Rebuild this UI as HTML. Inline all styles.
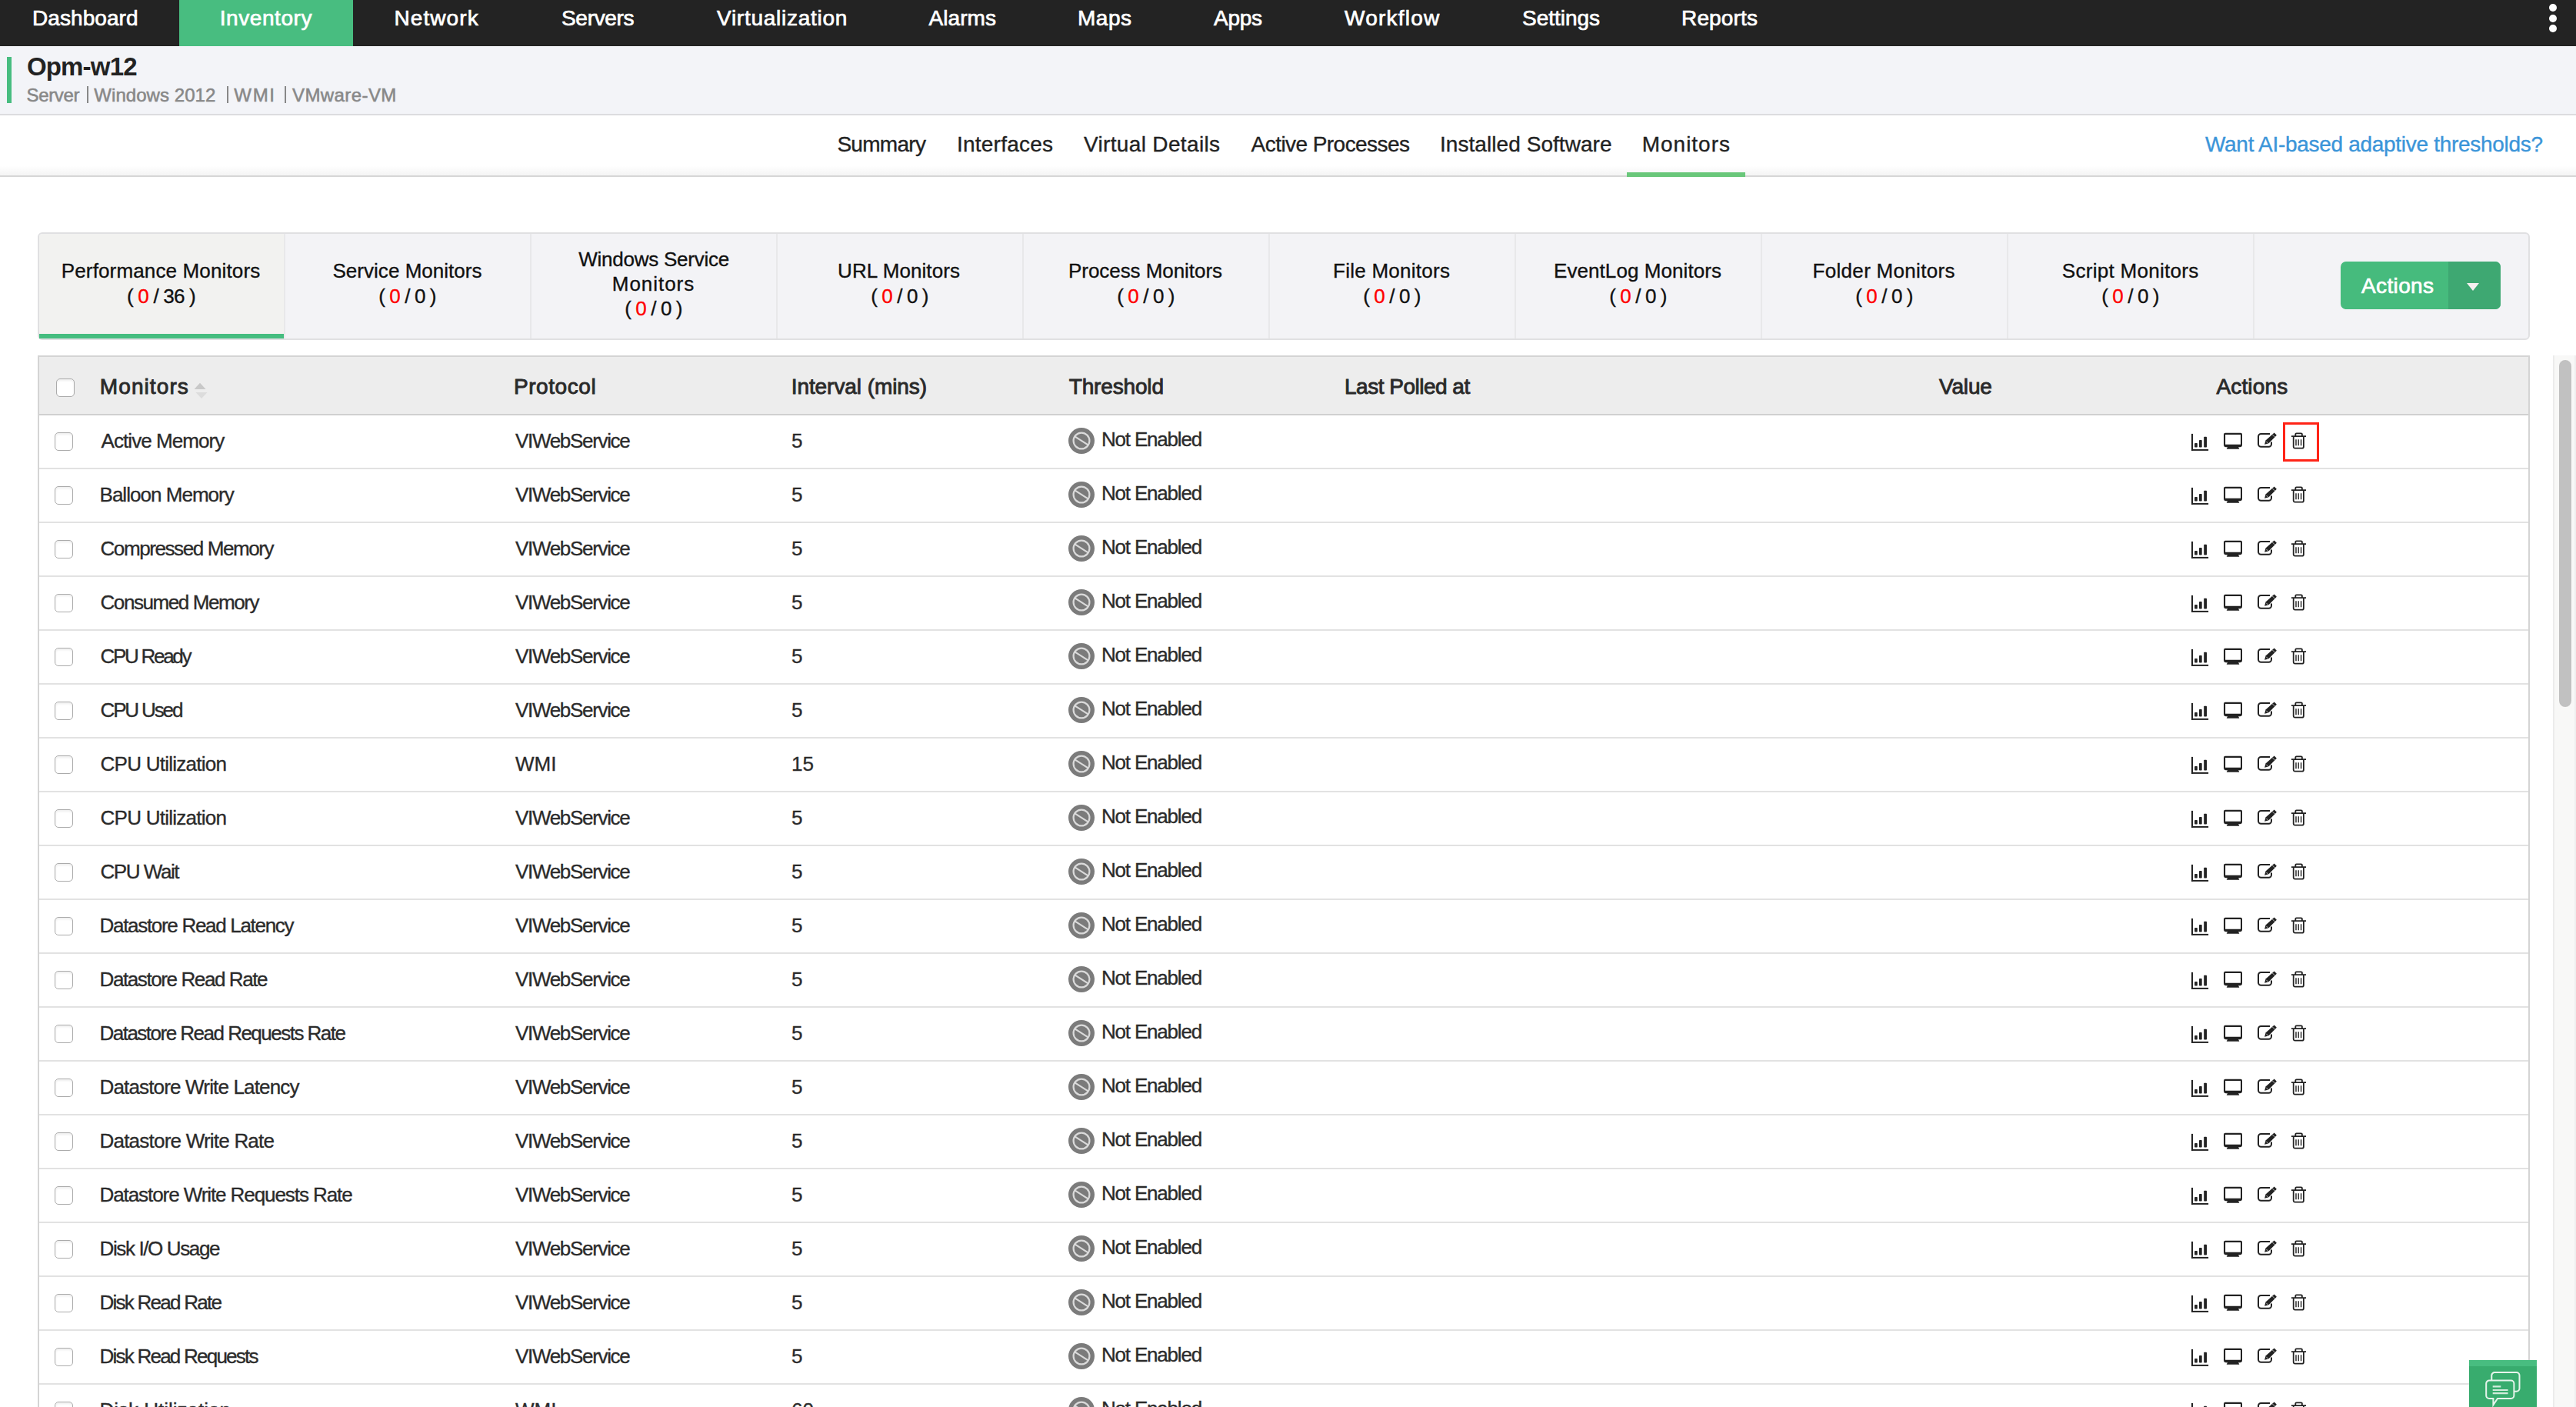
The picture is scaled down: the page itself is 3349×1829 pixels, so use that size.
<!DOCTYPE html><html><head><meta charset='utf-8'><style>
*{margin:0;padding:0;box-sizing:border-box}
html,body{width:3349px;height:1829px;overflow:hidden;background:#fff;font-family:"Liberation Sans",sans-serif;color:#222}
.t{position:absolute;white-space:pre}
.abs{position:absolute}
.cb{position:absolute;width:24px;height:24px;border:1.5px solid #ababab;border-radius:5px;background:#fff;box-shadow:inset 0 2px 3px rgba(0,0,0,0.07)}
</style></head><body>
<div class="abs" style="left:0;top:0;width:3349px;height:60px;background:#232323"></div>
<div class="abs" style="left:233px;top:0;width:226px;height:60px;background:#48bd80"></div>
<div class="t" style="left:42.00px;top:10.29px;font-size:28px;line-height:28px;color:#fff;letter-spacing:0.074px;-webkit-text-stroke-width:0.7px;">Dashboard</div>
<div class="t" style="left:285.70px;top:10.29px;font-size:28px;line-height:28px;color:#fff;letter-spacing:0.579px;-webkit-text-stroke-width:0.7px;">Inventory</div>
<div class="t" style="left:512.40px;top:10.29px;font-size:28px;line-height:28px;color:#fff;letter-spacing:1.102px;-webkit-text-stroke-width:0.7px;">Network</div>
<div class="t" style="left:730.00px;top:10.29px;font-size:28px;line-height:28px;color:#fff;letter-spacing:-0.311px;-webkit-text-stroke-width:0.7px;">Servers</div>
<div class="t" style="left:932.00px;top:10.29px;font-size:28px;line-height:28px;color:#fff;letter-spacing:0.729px;-webkit-text-stroke-width:0.7px;">Virtualization</div>
<div class="t" style="left:1207.60px;top:10.29px;font-size:28px;line-height:28px;color:#fff;letter-spacing:0.057px;-webkit-text-stroke-width:0.7px;">Alarms</div>
<div class="t" style="left:1401.00px;top:10.29px;font-size:28px;line-height:28px;color:#fff;letter-spacing:0.510px;-webkit-text-stroke-width:0.7px;">Maps</div>
<div class="t" style="left:1578.00px;top:10.29px;font-size:28px;line-height:28px;color:#fff;letter-spacing:-0.273px;-webkit-text-stroke-width:0.7px;">Apps</div>
<div class="t" style="left:1748.00px;top:10.29px;font-size:28px;line-height:28px;color:#fff;letter-spacing:1.230px;-webkit-text-stroke-width:0.7px;">Workflow</div>
<div class="t" style="left:1979.00px;top:10.29px;font-size:28px;line-height:28px;color:#fff;letter-spacing:-0.025px;-webkit-text-stroke-width:0.7px;">Settings</div>
<div class="t" style="left:2186.00px;top:10.29px;font-size:28px;line-height:28px;color:#fff;letter-spacing:0.160px;-webkit-text-stroke-width:0.7px;">Reports</div>
<div class="abs" style="left:3314px;top:5.199999999999999px;width:10px;height:10px;border-radius:50%;background:#fff"></div>
<div class="abs" style="left:3314px;top:18.8px;width:10px;height:10px;border-radius:50%;background:#fff"></div>
<div class="abs" style="left:3314px;top:32px;width:10px;height:10px;border-radius:50%;background:#fff"></div>
<div class="abs" style="left:0;top:60px;width:3349px;height:90px;background:#f3f4f8;border-bottom:2px solid #dcdcdf"></div>
<div class="abs" style="left:9px;top:74px;width:6px;height:60px;background:#48bd80"></div>
<div class="t" style="left:34.90px;top:70.36px;font-size:33px;line-height:33px;color:#222;font-weight:700;letter-spacing:-0.813px;">Opm-w12</div>
<div class="t" style="left:34.50px;top:111.68px;font-size:24px;line-height:24px;color:#888;letter-spacing:-0.359px;-webkit-text-stroke-width:0.55px;">Server</div>
<div class="abs" style="left:112.7px;top:111.5px;width:2px;height:22px;background:#888"></div>
<div class="abs" style="left:294.6px;top:111.5px;width:2px;height:22px;background:#888"></div>
<div class="abs" style="left:370.2px;top:111.5px;width:2px;height:22px;background:#888"></div>
<div class="t" style="left:122.30px;top:111.68px;font-size:24px;line-height:24px;color:#888;letter-spacing:0.057px;-webkit-text-stroke-width:0.55px;">Windows 2012</div>
<div class="t" style="left:304.30px;top:111.68px;font-size:24px;line-height:24px;color:#888;letter-spacing:1.678px;-webkit-text-stroke-width:0.55px;">WMI</div>
<div class="t" style="left:380.00px;top:111.68px;font-size:24px;line-height:24px;color:#888;letter-spacing:0.410px;-webkit-text-stroke-width:0.55px;">VMware-VM</div>
<div class="abs" style="left:0;top:150px;width:3349px;height:80px;background:linear-gradient(#fff 0,#fff 84%,#f4f4f4 100%);border-bottom:2px solid #d6d6d6"></div>
<div class="t" style="left:1088.40px;top:173.89px;font-size:28px;line-height:28px;color:#222;letter-spacing:-0.699px;-webkit-text-stroke-width:0.35px;">Summary</div>
<div class="t" style="left:1244.00px;top:173.89px;font-size:28px;line-height:28px;color:#222;letter-spacing:0.228px;-webkit-text-stroke-width:0.35px;">Interfaces</div>
<div class="t" style="left:1409.00px;top:173.89px;font-size:28px;line-height:28px;color:#222;letter-spacing:0.341px;-webkit-text-stroke-width:0.35px;">Virtual Details</div>
<div class="t" style="left:1626.60px;top:173.89px;font-size:28px;line-height:28px;color:#222;letter-spacing:-0.556px;-webkit-text-stroke-width:0.35px;">Active Processes</div>
<div class="t" style="left:1872.00px;top:173.89px;font-size:28px;line-height:28px;color:#222;letter-spacing:0.059px;-webkit-text-stroke-width:0.35px;">Installed Software</div>
<div class="t" style="left:2134.70px;top:173.89px;font-size:28px;line-height:28px;color:#222;letter-spacing:0.991px;-webkit-text-stroke-width:0.35px;">Monitors</div>
<div class="abs" style="left:2115px;top:224px;width:154px;height:6px;background:#69c77a"></div>
<div class="t" style="left:2867.00px;top:173.69px;font-size:28px;line-height:28px;color:#3b95d9;letter-spacing:-0.296px;-webkit-text-stroke-width:0.35px;">Want AI-based adaptive thresholds?</div>
<div class="abs" style="left:49px;top:302px;width:3240px;height:140px;background:#f3f3f6;border:2px solid #e0e0e2;border-radius:6px"><div class="abs" style="left:0;top:0;width:318px;height:136px;background:#f2f2f0;border-top-left-radius:4px"></div><div class="abs" style="left:0;top:130px;width:318px;height:6px;background:#45bd7f"></div></div>
<div class="abs" style="left:369px;top:304px;width:2px;height:136px;background:#e8e8ea"></div>
<div class="abs" style="left:689px;top:304px;width:2px;height:136px;background:#e8e8ea"></div>
<div class="abs" style="left:1009px;top:304px;width:2px;height:136px;background:#e8e8ea"></div>
<div class="abs" style="left:1329px;top:304px;width:2px;height:136px;background:#e8e8ea"></div>
<div class="abs" style="left:1649px;top:304px;width:2px;height:136px;background:#e8e8ea"></div>
<div class="abs" style="left:1969px;top:304px;width:2px;height:136px;background:#e8e8ea"></div>
<div class="abs" style="left:2289px;top:304px;width:2px;height:136px;background:#e8e8ea"></div>
<div class="abs" style="left:2609px;top:304px;width:2px;height:136px;background:#e8e8ea"></div>
<div class="abs" style="left:2929px;top:304px;width:2px;height:136px;background:#e8e8ea"></div>
<div class="t" style="left:79.75px;top:339.49px;font-size:26px;line-height:26px;color:#111;letter-spacing:0.144px;-webkit-text-stroke-width:0.35px;">Performance Monitors</div>
<div class="t" style="left:165.00px;top:371.59px;font-size:26px;line-height:26px;color:#111;letter-spacing:-0.795px;-webkit-text-stroke-width:0.35px;">( <span style='color:#f00'>0</span> / 36 )</div>
<div class="t" style="left:432.50px;top:339.49px;font-size:26px;line-height:26px;color:#111;letter-spacing:0.026px;-webkit-text-stroke-width:0.35px;">Service Monitors</div>
<div class="t" style="left:492.20px;top:371.59px;font-size:26px;line-height:26px;color:#111;letter-spacing:-0.887px;-webkit-text-stroke-width:0.35px;">( <span style='color:#f00'>0</span> / 0 )</div>
<div class="t" style="left:752.15px;top:323.99px;font-size:26px;line-height:26px;color:#111;letter-spacing:-0.231px;-webkit-text-stroke-width:0.35px;">Windows Service</div>
<div class="t" style="left:795.85px;top:356.49px;font-size:26px;line-height:26px;color:#111;letter-spacing:0.943px;-webkit-text-stroke-width:0.35px;">Monitors</div>
<div class="t" style="left:812.20px;top:387.99px;font-size:26px;line-height:26px;color:#111;letter-spacing:-0.887px;-webkit-text-stroke-width:0.35px;">( <span style='color:#f00'>0</span> / 0 )</div>
<div class="t" style="left:1089.10px;top:339.49px;font-size:26px;line-height:26px;color:#111;letter-spacing:0.079px;-webkit-text-stroke-width:0.35px;">URL Monitors</div>
<div class="t" style="left:1132.20px;top:371.59px;font-size:26px;line-height:26px;color:#111;letter-spacing:-0.887px;-webkit-text-stroke-width:0.35px;">( <span style='color:#f00'>0</span> / 0 )</div>
<div class="t" style="left:1389.00px;top:339.49px;font-size:26px;line-height:26px;color:#111;letter-spacing:-0.056px;-webkit-text-stroke-width:0.35px;">Process Monitors</div>
<div class="t" style="left:1452.20px;top:371.59px;font-size:26px;line-height:26px;color:#111;letter-spacing:-0.887px;-webkit-text-stroke-width:0.35px;">( <span style='color:#f00'>0</span> / 0 )</div>
<div class="t" style="left:1733.00px;top:339.49px;font-size:26px;line-height:26px;color:#111;letter-spacing:0.265px;-webkit-text-stroke-width:0.35px;">File Monitors</div>
<div class="t" style="left:1772.20px;top:371.59px;font-size:26px;line-height:26px;color:#111;letter-spacing:-0.887px;-webkit-text-stroke-width:0.35px;">( <span style='color:#f00'>0</span> / 0 )</div>
<div class="t" style="left:2020.00px;top:339.49px;font-size:26px;line-height:26px;color:#111;letter-spacing:0.076px;-webkit-text-stroke-width:0.35px;">EventLog Monitors</div>
<div class="t" style="left:2092.20px;top:371.59px;font-size:26px;line-height:26px;color:#111;letter-spacing:-0.887px;-webkit-text-stroke-width:0.35px;">( <span style='color:#f00'>0</span> / 0 )</div>
<div class="t" style="left:2356.60px;top:339.49px;font-size:26px;line-height:26px;color:#111;letter-spacing:0.299px;-webkit-text-stroke-width:0.35px;">Folder Monitors</div>
<div class="t" style="left:2412.20px;top:371.59px;font-size:26px;line-height:26px;color:#111;letter-spacing:-0.887px;-webkit-text-stroke-width:0.35px;">( <span style='color:#f00'>0</span> / 0 )</div>
<div class="t" style="left:2680.80px;top:339.49px;font-size:26px;line-height:26px;color:#111;letter-spacing:0.287px;-webkit-text-stroke-width:0.35px;">Script Monitors</div>
<div class="t" style="left:2732.20px;top:371.59px;font-size:26px;line-height:26px;color:#111;letter-spacing:-0.887px;-webkit-text-stroke-width:0.35px;">( <span style='color:#f00'>0</span> / 0 )</div>
<div class="abs" style="left:3043px;top:340px;width:208px;height:62px;border-radius:7px;overflow:hidden;background:#46bb7d"><div class="abs" style="left:140px;top:0;width:68px;height:62px;background:#3ea872"></div><div class="abs" style="left:164px;top:28px;width:0;height:0;border-left:8px solid transparent;border-right:8px solid transparent;border-top:10px solid #f5f0f0"></div></div>
<div class="t" style="left:3070.00px;top:358.29px;font-size:28px;line-height:28px;color:#fff;letter-spacing:0.363px;-webkit-text-stroke-width:0.7px;">Actions</div>
<div class="abs" style="left:49px;top:462px;width:3240px;height:1400px;border:2px solid #d4d4d4;border-bottom:none"></div>
<div class="abs" style="left:51px;top:464px;width:3236px;height:76px;background:#ededed;border-bottom:2px solid #d0d0d0"></div>
<div class="cb" style="left:73px;top:492px"></div>
<div class="t" style="left:129.80px;top:488.59px;font-size:28px;line-height:28px;color:#2a2a2a;letter-spacing:1.091px;-webkit-text-stroke-width:0.9px;">Monitors</div>
<div class="t" style="left:668.00px;top:488.59px;font-size:28px;line-height:28px;color:#2a2a2a;letter-spacing:0.558px;-webkit-text-stroke-width:0.9px;">Protocol</div>
<div class="t" style="left:1028.70px;top:488.59px;font-size:28px;line-height:28px;color:#2a2a2a;letter-spacing:-0.067px;-webkit-text-stroke-width:0.9px;">Interval (mins)</div>
<div class="t" style="left:1389.70px;top:488.59px;font-size:28px;line-height:28px;color:#2a2a2a;letter-spacing:-0.155px;-webkit-text-stroke-width:0.9px;">Threshold</div>
<div class="t" style="left:1748.00px;top:488.59px;font-size:28px;line-height:28px;color:#2a2a2a;letter-spacing:-0.499px;-webkit-text-stroke-width:0.9px;">Last Polled at</div>
<div class="t" style="left:2521.00px;top:488.59px;font-size:28px;line-height:28px;color:#2a2a2a;letter-spacing:-0.166px;-webkit-text-stroke-width:0.9px;">Value</div>
<div class="t" style="left:2881.40px;top:488.59px;font-size:28px;line-height:28px;color:#2a2a2a;letter-spacing:0.163px;-webkit-text-stroke-width:0.9px;">Actions</div>
<svg class="abs" style="left:252px;top:497px" width="18" height="22" viewBox="0 0 18 22"><path d="M8 0.8L15.5 9H0.5z" fill="#c8c8c8"/><path d="M10 21L17.5 13H2.5z" fill="#dcdcdc"/></svg>
<div class="abs" style="left:51px;top:608px;width:3236px;height:2px;background:#e2e2e2"></div>
<div class="cb" style="left:71px;top:562px"></div>
<div class="t" style="left:131.50px;top:560.19px;font-size:26px;line-height:26px;color:#2b2b2b;letter-spacing:-0.927px;-webkit-text-stroke-width:0.35px;">Active Memory</div>
<div class="t" style="left:670.00px;top:560.19px;font-size:26px;line-height:26px;color:#2b2b2b;letter-spacing:-1.317px;-webkit-text-stroke-width:0.35px;">VIWebService</div>
<div class="t" style="left:1029.00px;top:560.19px;font-size:26px;line-height:26px;color:#2b2b2b;-webkit-text-stroke-width:0.35px;">5</div>
<svg class="abs" style="left:1389px;top:556px" width="34" height="34" viewBox="0 0 34 34"><circle cx="17" cy="17" r="17" fill="#7b7b7b"/><circle cx="17" cy="17" r="10.4" fill="none" stroke="#dadada" stroke-width="2.2"/><path d="M8.3 11.4L25.6 22.4" stroke="#dadada" stroke-width="2.2"/></svg>
<div class="t" style="left:1432.00px;top:557.59px;font-size:26px;line-height:26px;color:#2b2b2b;letter-spacing:-1.194px;-webkit-text-stroke-width:0.35px;">Not Enabled</div>
<svg class="abs" style="left:2845px;top:559px" width="160" height="30" viewBox="0 0 160 30">
<g fill="#222">
<rect x="4" y="4.9" width="2" height="22"/><rect x="4" y="24.9" width="22.1" height="2"/>
<rect x="8.1" y="17.1" width="3.7" height="5.4" rx="0.8"/><rect x="14" y="12.9" width="3.7" height="9.6" rx="0.8"/><rect x="20.2" y="8.7" width="3.8" height="13.8" rx="0.8"/>
<path fill-rule="evenodd" d="M46 5.8a2 2 0 0 1 2-2h20a2 2 0 0 1 2 2v13.5a3 3 0 0 1-3 3H49a3 3 0 0 1-3-3zM48.1 5.9v12.9H68V5.9z"/>
<path d="M51 22h14l1.3 2.8H49.7z"/>
</g>
<g fill="none" stroke="#222" stroke-width="2">
<path d="M106 5H94.5a3.5 3.5 0 0 0-3.5 3.5v9.7a3.5 3.5 0 0 0 3.5 3.5h10a3.5 3.5 0 0 0 3.5-3.5V15.5"/>
</g>
<g fill="none" stroke="#222" stroke-width="1.8">
<path d="M134 8.1h19M139.3 7.8V5.6a1.3 1.3 0 0 1 1.3-1.3h6a1.3 1.3 0 0 1 1.3 1.3v2.2M136.7 8.5v13.3a1.9 1.9 0 0 0 1.9 1.9h9.4a1.9 1.9 0 0 0 1.9-1.9V8.5"/>
</g>
<g stroke="#222" stroke-width="1.4"><path d="M140 12.2v8M143.2 12.2v8M146.6 12.2v8"/></g>
<path fill="#222" d="M111.7 3.6l3.2 3.2-10.6 10.6-5.2 1.4 1.4-5.2z"/>
<path fill="none" stroke="#fff" stroke-width="0.7" d="M101.3 14.8l3.2 3.2M109.4 6.0l3 3"/>
</svg>
<div class="abs" style="left:51px;top:678px;width:3236px;height:2px;background:#e2e2e2"></div>
<div class="cb" style="left:71px;top:632px"></div>
<div class="t" style="left:129.50px;top:630.19px;font-size:26px;line-height:26px;color:#2b2b2b;letter-spacing:-0.966px;-webkit-text-stroke-width:0.35px;">Balloon Memory</div>
<div class="t" style="left:670.00px;top:630.19px;font-size:26px;line-height:26px;color:#2b2b2b;letter-spacing:-1.317px;-webkit-text-stroke-width:0.35px;">VIWebService</div>
<div class="t" style="left:1029.00px;top:630.19px;font-size:26px;line-height:26px;color:#2b2b2b;-webkit-text-stroke-width:0.35px;">5</div>
<svg class="abs" style="left:1389px;top:626px" width="34" height="34" viewBox="0 0 34 34"><circle cx="17" cy="17" r="17" fill="#7b7b7b"/><circle cx="17" cy="17" r="10.4" fill="none" stroke="#dadada" stroke-width="2.2"/><path d="M8.3 11.4L25.6 22.4" stroke="#dadada" stroke-width="2.2"/></svg>
<div class="t" style="left:1432.00px;top:627.59px;font-size:26px;line-height:26px;color:#2b2b2b;letter-spacing:-1.194px;-webkit-text-stroke-width:0.35px;">Not Enabled</div>
<svg class="abs" style="left:2845px;top:629px" width="160" height="30" viewBox="0 0 160 30">
<g fill="#222">
<rect x="4" y="4.9" width="2" height="22"/><rect x="4" y="24.9" width="22.1" height="2"/>
<rect x="8.1" y="17.1" width="3.7" height="5.4" rx="0.8"/><rect x="14" y="12.9" width="3.7" height="9.6" rx="0.8"/><rect x="20.2" y="8.7" width="3.8" height="13.8" rx="0.8"/>
<path fill-rule="evenodd" d="M46 5.8a2 2 0 0 1 2-2h20a2 2 0 0 1 2 2v13.5a3 3 0 0 1-3 3H49a3 3 0 0 1-3-3zM48.1 5.9v12.9H68V5.9z"/>
<path d="M51 22h14l1.3 2.8H49.7z"/>
</g>
<g fill="none" stroke="#222" stroke-width="2">
<path d="M106 5H94.5a3.5 3.5 0 0 0-3.5 3.5v9.7a3.5 3.5 0 0 0 3.5 3.5h10a3.5 3.5 0 0 0 3.5-3.5V15.5"/>
</g>
<g fill="none" stroke="#222" stroke-width="1.8">
<path d="M134 8.1h19M139.3 7.8V5.6a1.3 1.3 0 0 1 1.3-1.3h6a1.3 1.3 0 0 1 1.3 1.3v2.2M136.7 8.5v13.3a1.9 1.9 0 0 0 1.9 1.9h9.4a1.9 1.9 0 0 0 1.9-1.9V8.5"/>
</g>
<g stroke="#222" stroke-width="1.4"><path d="M140 12.2v8M143.2 12.2v8M146.6 12.2v8"/></g>
<path fill="#222" d="M111.7 3.6l3.2 3.2-10.6 10.6-5.2 1.4 1.4-5.2z"/>
<path fill="none" stroke="#fff" stroke-width="0.7" d="M101.3 14.8l3.2 3.2M109.4 6.0l3 3"/>
</svg>
<div class="abs" style="left:51px;top:748px;width:3236px;height:2px;background:#e2e2e2"></div>
<div class="cb" style="left:71px;top:702px"></div>
<div class="t" style="left:130.50px;top:700.19px;font-size:26px;line-height:26px;color:#2b2b2b;letter-spacing:-1.407px;-webkit-text-stroke-width:0.35px;">Compressed Memory</div>
<div class="t" style="left:670.00px;top:700.19px;font-size:26px;line-height:26px;color:#2b2b2b;letter-spacing:-1.317px;-webkit-text-stroke-width:0.35px;">VIWebService</div>
<div class="t" style="left:1029.00px;top:700.19px;font-size:26px;line-height:26px;color:#2b2b2b;-webkit-text-stroke-width:0.35px;">5</div>
<svg class="abs" style="left:1389px;top:696px" width="34" height="34" viewBox="0 0 34 34"><circle cx="17" cy="17" r="17" fill="#7b7b7b"/><circle cx="17" cy="17" r="10.4" fill="none" stroke="#dadada" stroke-width="2.2"/><path d="M8.3 11.4L25.6 22.4" stroke="#dadada" stroke-width="2.2"/></svg>
<div class="t" style="left:1432.00px;top:697.59px;font-size:26px;line-height:26px;color:#2b2b2b;letter-spacing:-1.194px;-webkit-text-stroke-width:0.35px;">Not Enabled</div>
<svg class="abs" style="left:2845px;top:699px" width="160" height="30" viewBox="0 0 160 30">
<g fill="#222">
<rect x="4" y="4.9" width="2" height="22"/><rect x="4" y="24.9" width="22.1" height="2"/>
<rect x="8.1" y="17.1" width="3.7" height="5.4" rx="0.8"/><rect x="14" y="12.9" width="3.7" height="9.6" rx="0.8"/><rect x="20.2" y="8.7" width="3.8" height="13.8" rx="0.8"/>
<path fill-rule="evenodd" d="M46 5.8a2 2 0 0 1 2-2h20a2 2 0 0 1 2 2v13.5a3 3 0 0 1-3 3H49a3 3 0 0 1-3-3zM48.1 5.9v12.9H68V5.9z"/>
<path d="M51 22h14l1.3 2.8H49.7z"/>
</g>
<g fill="none" stroke="#222" stroke-width="2">
<path d="M106 5H94.5a3.5 3.5 0 0 0-3.5 3.5v9.7a3.5 3.5 0 0 0 3.5 3.5h10a3.5 3.5 0 0 0 3.5-3.5V15.5"/>
</g>
<g fill="none" stroke="#222" stroke-width="1.8">
<path d="M134 8.1h19M139.3 7.8V5.6a1.3 1.3 0 0 1 1.3-1.3h6a1.3 1.3 0 0 1 1.3 1.3v2.2M136.7 8.5v13.3a1.9 1.9 0 0 0 1.9 1.9h9.4a1.9 1.9 0 0 0 1.9-1.9V8.5"/>
</g>
<g stroke="#222" stroke-width="1.4"><path d="M140 12.2v8M143.2 12.2v8M146.6 12.2v8"/></g>
<path fill="#222" d="M111.7 3.6l3.2 3.2-10.6 10.6-5.2 1.4 1.4-5.2z"/>
<path fill="none" stroke="#fff" stroke-width="0.7" d="M101.3 14.8l3.2 3.2M109.4 6.0l3 3"/>
</svg>
<div class="abs" style="left:51px;top:818px;width:3236px;height:2px;background:#e2e2e2"></div>
<div class="cb" style="left:71px;top:772px"></div>
<div class="t" style="left:130.50px;top:770.19px;font-size:26px;line-height:26px;color:#2b2b2b;letter-spacing:-1.418px;-webkit-text-stroke-width:0.35px;">Consumed Memory</div>
<div class="t" style="left:670.00px;top:770.19px;font-size:26px;line-height:26px;color:#2b2b2b;letter-spacing:-1.317px;-webkit-text-stroke-width:0.35px;">VIWebService</div>
<div class="t" style="left:1029.00px;top:770.19px;font-size:26px;line-height:26px;color:#2b2b2b;-webkit-text-stroke-width:0.35px;">5</div>
<svg class="abs" style="left:1389px;top:766px" width="34" height="34" viewBox="0 0 34 34"><circle cx="17" cy="17" r="17" fill="#7b7b7b"/><circle cx="17" cy="17" r="10.4" fill="none" stroke="#dadada" stroke-width="2.2"/><path d="M8.3 11.4L25.6 22.4" stroke="#dadada" stroke-width="2.2"/></svg>
<div class="t" style="left:1432.00px;top:767.59px;font-size:26px;line-height:26px;color:#2b2b2b;letter-spacing:-1.194px;-webkit-text-stroke-width:0.35px;">Not Enabled</div>
<svg class="abs" style="left:2845px;top:769px" width="160" height="30" viewBox="0 0 160 30">
<g fill="#222">
<rect x="4" y="4.9" width="2" height="22"/><rect x="4" y="24.9" width="22.1" height="2"/>
<rect x="8.1" y="17.1" width="3.7" height="5.4" rx="0.8"/><rect x="14" y="12.9" width="3.7" height="9.6" rx="0.8"/><rect x="20.2" y="8.7" width="3.8" height="13.8" rx="0.8"/>
<path fill-rule="evenodd" d="M46 5.8a2 2 0 0 1 2-2h20a2 2 0 0 1 2 2v13.5a3 3 0 0 1-3 3H49a3 3 0 0 1-3-3zM48.1 5.9v12.9H68V5.9z"/>
<path d="M51 22h14l1.3 2.8H49.7z"/>
</g>
<g fill="none" stroke="#222" stroke-width="2">
<path d="M106 5H94.5a3.5 3.5 0 0 0-3.5 3.5v9.7a3.5 3.5 0 0 0 3.5 3.5h10a3.5 3.5 0 0 0 3.5-3.5V15.5"/>
</g>
<g fill="none" stroke="#222" stroke-width="1.8">
<path d="M134 8.1h19M139.3 7.8V5.6a1.3 1.3 0 0 1 1.3-1.3h6a1.3 1.3 0 0 1 1.3 1.3v2.2M136.7 8.5v13.3a1.9 1.9 0 0 0 1.9 1.9h9.4a1.9 1.9 0 0 0 1.9-1.9V8.5"/>
</g>
<g stroke="#222" stroke-width="1.4"><path d="M140 12.2v8M143.2 12.2v8M146.6 12.2v8"/></g>
<path fill="#222" d="M111.7 3.6l3.2 3.2-10.6 10.6-5.2 1.4 1.4-5.2z"/>
<path fill="none" stroke="#fff" stroke-width="0.7" d="M101.3 14.8l3.2 3.2M109.4 6.0l3 3"/>
</svg>
<div class="abs" style="left:51px;top:888px;width:3236px;height:2px;background:#e2e2e2"></div>
<div class="cb" style="left:71px;top:842px"></div>
<div class="t" style="left:130.50px;top:840.19px;font-size:26px;line-height:26px;color:#2b2b2b;letter-spacing:-2.284px;-webkit-text-stroke-width:0.35px;">CPU Ready</div>
<div class="t" style="left:670.00px;top:840.19px;font-size:26px;line-height:26px;color:#2b2b2b;letter-spacing:-1.317px;-webkit-text-stroke-width:0.35px;">VIWebService</div>
<div class="t" style="left:1029.00px;top:840.19px;font-size:26px;line-height:26px;color:#2b2b2b;-webkit-text-stroke-width:0.35px;">5</div>
<svg class="abs" style="left:1389px;top:836px" width="34" height="34" viewBox="0 0 34 34"><circle cx="17" cy="17" r="17" fill="#7b7b7b"/><circle cx="17" cy="17" r="10.4" fill="none" stroke="#dadada" stroke-width="2.2"/><path d="M8.3 11.4L25.6 22.4" stroke="#dadada" stroke-width="2.2"/></svg>
<div class="t" style="left:1432.00px;top:837.59px;font-size:26px;line-height:26px;color:#2b2b2b;letter-spacing:-1.194px;-webkit-text-stroke-width:0.35px;">Not Enabled</div>
<svg class="abs" style="left:2845px;top:839px" width="160" height="30" viewBox="0 0 160 30">
<g fill="#222">
<rect x="4" y="4.9" width="2" height="22"/><rect x="4" y="24.9" width="22.1" height="2"/>
<rect x="8.1" y="17.1" width="3.7" height="5.4" rx="0.8"/><rect x="14" y="12.9" width="3.7" height="9.6" rx="0.8"/><rect x="20.2" y="8.7" width="3.8" height="13.8" rx="0.8"/>
<path fill-rule="evenodd" d="M46 5.8a2 2 0 0 1 2-2h20a2 2 0 0 1 2 2v13.5a3 3 0 0 1-3 3H49a3 3 0 0 1-3-3zM48.1 5.9v12.9H68V5.9z"/>
<path d="M51 22h14l1.3 2.8H49.7z"/>
</g>
<g fill="none" stroke="#222" stroke-width="2">
<path d="M106 5H94.5a3.5 3.5 0 0 0-3.5 3.5v9.7a3.5 3.5 0 0 0 3.5 3.5h10a3.5 3.5 0 0 0 3.5-3.5V15.5"/>
</g>
<g fill="none" stroke="#222" stroke-width="1.8">
<path d="M134 8.1h19M139.3 7.8V5.6a1.3 1.3 0 0 1 1.3-1.3h6a1.3 1.3 0 0 1 1.3 1.3v2.2M136.7 8.5v13.3a1.9 1.9 0 0 0 1.9 1.9h9.4a1.9 1.9 0 0 0 1.9-1.9V8.5"/>
</g>
<g stroke="#222" stroke-width="1.4"><path d="M140 12.2v8M143.2 12.2v8M146.6 12.2v8"/></g>
<path fill="#222" d="M111.7 3.6l3.2 3.2-10.6 10.6-5.2 1.4 1.4-5.2z"/>
<path fill="none" stroke="#fff" stroke-width="0.7" d="M101.3 14.8l3.2 3.2M109.4 6.0l3 3"/>
</svg>
<div class="abs" style="left:51px;top:958px;width:3236px;height:2px;background:#e2e2e2"></div>
<div class="cb" style="left:71px;top:912px"></div>
<div class="t" style="left:130.50px;top:910.19px;font-size:26px;line-height:26px;color:#2b2b2b;letter-spacing:-2.136px;-webkit-text-stroke-width:0.35px;">CPU Used</div>
<div class="t" style="left:670.00px;top:910.19px;font-size:26px;line-height:26px;color:#2b2b2b;letter-spacing:-1.317px;-webkit-text-stroke-width:0.35px;">VIWebService</div>
<div class="t" style="left:1029.00px;top:910.19px;font-size:26px;line-height:26px;color:#2b2b2b;-webkit-text-stroke-width:0.35px;">5</div>
<svg class="abs" style="left:1389px;top:906px" width="34" height="34" viewBox="0 0 34 34"><circle cx="17" cy="17" r="17" fill="#7b7b7b"/><circle cx="17" cy="17" r="10.4" fill="none" stroke="#dadada" stroke-width="2.2"/><path d="M8.3 11.4L25.6 22.4" stroke="#dadada" stroke-width="2.2"/></svg>
<div class="t" style="left:1432.00px;top:907.59px;font-size:26px;line-height:26px;color:#2b2b2b;letter-spacing:-1.194px;-webkit-text-stroke-width:0.35px;">Not Enabled</div>
<svg class="abs" style="left:2845px;top:909px" width="160" height="30" viewBox="0 0 160 30">
<g fill="#222">
<rect x="4" y="4.9" width="2" height="22"/><rect x="4" y="24.9" width="22.1" height="2"/>
<rect x="8.1" y="17.1" width="3.7" height="5.4" rx="0.8"/><rect x="14" y="12.9" width="3.7" height="9.6" rx="0.8"/><rect x="20.2" y="8.7" width="3.8" height="13.8" rx="0.8"/>
<path fill-rule="evenodd" d="M46 5.8a2 2 0 0 1 2-2h20a2 2 0 0 1 2 2v13.5a3 3 0 0 1-3 3H49a3 3 0 0 1-3-3zM48.1 5.9v12.9H68V5.9z"/>
<path d="M51 22h14l1.3 2.8H49.7z"/>
</g>
<g fill="none" stroke="#222" stroke-width="2">
<path d="M106 5H94.5a3.5 3.5 0 0 0-3.5 3.5v9.7a3.5 3.5 0 0 0 3.5 3.5h10a3.5 3.5 0 0 0 3.5-3.5V15.5"/>
</g>
<g fill="none" stroke="#222" stroke-width="1.8">
<path d="M134 8.1h19M139.3 7.8V5.6a1.3 1.3 0 0 1 1.3-1.3h6a1.3 1.3 0 0 1 1.3 1.3v2.2M136.7 8.5v13.3a1.9 1.9 0 0 0 1.9 1.9h9.4a1.9 1.9 0 0 0 1.9-1.9V8.5"/>
</g>
<g stroke="#222" stroke-width="1.4"><path d="M140 12.2v8M143.2 12.2v8M146.6 12.2v8"/></g>
<path fill="#222" d="M111.7 3.6l3.2 3.2-10.6 10.6-5.2 1.4 1.4-5.2z"/>
<path fill="none" stroke="#fff" stroke-width="0.7" d="M101.3 14.8l3.2 3.2M109.4 6.0l3 3"/>
</svg>
<div class="abs" style="left:51px;top:1028px;width:3236px;height:2px;background:#e2e2e2"></div>
<div class="cb" style="left:71px;top:982px"></div>
<div class="t" style="left:130.50px;top:980.19px;font-size:26px;line-height:26px;color:#2b2b2b;letter-spacing:-0.741px;-webkit-text-stroke-width:0.35px;">CPU Utilization</div>
<div class="t" style="left:670.00px;top:980.19px;font-size:26px;line-height:26px;color:#2b2b2b;-webkit-text-stroke-width:0.35px;">WMI</div>
<div class="t" style="left:1029.00px;top:980.19px;font-size:26px;line-height:26px;color:#2b2b2b;-webkit-text-stroke-width:0.35px;">15</div>
<svg class="abs" style="left:1389px;top:976px" width="34" height="34" viewBox="0 0 34 34"><circle cx="17" cy="17" r="17" fill="#7b7b7b"/><circle cx="17" cy="17" r="10.4" fill="none" stroke="#dadada" stroke-width="2.2"/><path d="M8.3 11.4L25.6 22.4" stroke="#dadada" stroke-width="2.2"/></svg>
<div class="t" style="left:1432.00px;top:977.59px;font-size:26px;line-height:26px;color:#2b2b2b;letter-spacing:-1.194px;-webkit-text-stroke-width:0.35px;">Not Enabled</div>
<svg class="abs" style="left:2845px;top:979px" width="160" height="30" viewBox="0 0 160 30">
<g fill="#222">
<rect x="4" y="4.9" width="2" height="22"/><rect x="4" y="24.9" width="22.1" height="2"/>
<rect x="8.1" y="17.1" width="3.7" height="5.4" rx="0.8"/><rect x="14" y="12.9" width="3.7" height="9.6" rx="0.8"/><rect x="20.2" y="8.7" width="3.8" height="13.8" rx="0.8"/>
<path fill-rule="evenodd" d="M46 5.8a2 2 0 0 1 2-2h20a2 2 0 0 1 2 2v13.5a3 3 0 0 1-3 3H49a3 3 0 0 1-3-3zM48.1 5.9v12.9H68V5.9z"/>
<path d="M51 22h14l1.3 2.8H49.7z"/>
</g>
<g fill="none" stroke="#222" stroke-width="2">
<path d="M106 5H94.5a3.5 3.5 0 0 0-3.5 3.5v9.7a3.5 3.5 0 0 0 3.5 3.5h10a3.5 3.5 0 0 0 3.5-3.5V15.5"/>
</g>
<g fill="none" stroke="#222" stroke-width="1.8">
<path d="M134 8.1h19M139.3 7.8V5.6a1.3 1.3 0 0 1 1.3-1.3h6a1.3 1.3 0 0 1 1.3 1.3v2.2M136.7 8.5v13.3a1.9 1.9 0 0 0 1.9 1.9h9.4a1.9 1.9 0 0 0 1.9-1.9V8.5"/>
</g>
<g stroke="#222" stroke-width="1.4"><path d="M140 12.2v8M143.2 12.2v8M146.6 12.2v8"/></g>
<path fill="#222" d="M111.7 3.6l3.2 3.2-10.6 10.6-5.2 1.4 1.4-5.2z"/>
<path fill="none" stroke="#fff" stroke-width="0.7" d="M101.3 14.8l3.2 3.2M109.4 6.0l3 3"/>
</svg>
<div class="abs" style="left:51px;top:1098px;width:3236px;height:2px;background:#e2e2e2"></div>
<div class="cb" style="left:71px;top:1052px"></div>
<div class="t" style="left:130.50px;top:1050.19px;font-size:26px;line-height:26px;color:#2b2b2b;letter-spacing:-0.741px;-webkit-text-stroke-width:0.35px;">CPU Utilization</div>
<div class="t" style="left:670.00px;top:1050.19px;font-size:26px;line-height:26px;color:#2b2b2b;letter-spacing:-1.317px;-webkit-text-stroke-width:0.35px;">VIWebService</div>
<div class="t" style="left:1029.00px;top:1050.19px;font-size:26px;line-height:26px;color:#2b2b2b;-webkit-text-stroke-width:0.35px;">5</div>
<svg class="abs" style="left:1389px;top:1046px" width="34" height="34" viewBox="0 0 34 34"><circle cx="17" cy="17" r="17" fill="#7b7b7b"/><circle cx="17" cy="17" r="10.4" fill="none" stroke="#dadada" stroke-width="2.2"/><path d="M8.3 11.4L25.6 22.4" stroke="#dadada" stroke-width="2.2"/></svg>
<div class="t" style="left:1432.00px;top:1047.59px;font-size:26px;line-height:26px;color:#2b2b2b;letter-spacing:-1.194px;-webkit-text-stroke-width:0.35px;">Not Enabled</div>
<svg class="abs" style="left:2845px;top:1049px" width="160" height="30" viewBox="0 0 160 30">
<g fill="#222">
<rect x="4" y="4.9" width="2" height="22"/><rect x="4" y="24.9" width="22.1" height="2"/>
<rect x="8.1" y="17.1" width="3.7" height="5.4" rx="0.8"/><rect x="14" y="12.9" width="3.7" height="9.6" rx="0.8"/><rect x="20.2" y="8.7" width="3.8" height="13.8" rx="0.8"/>
<path fill-rule="evenodd" d="M46 5.8a2 2 0 0 1 2-2h20a2 2 0 0 1 2 2v13.5a3 3 0 0 1-3 3H49a3 3 0 0 1-3-3zM48.1 5.9v12.9H68V5.9z"/>
<path d="M51 22h14l1.3 2.8H49.7z"/>
</g>
<g fill="none" stroke="#222" stroke-width="2">
<path d="M106 5H94.5a3.5 3.5 0 0 0-3.5 3.5v9.7a3.5 3.5 0 0 0 3.5 3.5h10a3.5 3.5 0 0 0 3.5-3.5V15.5"/>
</g>
<g fill="none" stroke="#222" stroke-width="1.8">
<path d="M134 8.1h19M139.3 7.8V5.6a1.3 1.3 0 0 1 1.3-1.3h6a1.3 1.3 0 0 1 1.3 1.3v2.2M136.7 8.5v13.3a1.9 1.9 0 0 0 1.9 1.9h9.4a1.9 1.9 0 0 0 1.9-1.9V8.5"/>
</g>
<g stroke="#222" stroke-width="1.4"><path d="M140 12.2v8M143.2 12.2v8M146.6 12.2v8"/></g>
<path fill="#222" d="M111.7 3.6l3.2 3.2-10.6 10.6-5.2 1.4 1.4-5.2z"/>
<path fill="none" stroke="#fff" stroke-width="0.7" d="M101.3 14.8l3.2 3.2M109.4 6.0l3 3"/>
</svg>
<div class="abs" style="left:51px;top:1168px;width:3236px;height:2px;background:#e2e2e2"></div>
<div class="cb" style="left:71px;top:1122px"></div>
<div class="t" style="left:130.50px;top:1120.19px;font-size:26px;line-height:26px;color:#2b2b2b;letter-spacing:-1.461px;-webkit-text-stroke-width:0.35px;">CPU Wait</div>
<div class="t" style="left:670.00px;top:1120.19px;font-size:26px;line-height:26px;color:#2b2b2b;letter-spacing:-1.317px;-webkit-text-stroke-width:0.35px;">VIWebService</div>
<div class="t" style="left:1029.00px;top:1120.19px;font-size:26px;line-height:26px;color:#2b2b2b;-webkit-text-stroke-width:0.35px;">5</div>
<svg class="abs" style="left:1389px;top:1116px" width="34" height="34" viewBox="0 0 34 34"><circle cx="17" cy="17" r="17" fill="#7b7b7b"/><circle cx="17" cy="17" r="10.4" fill="none" stroke="#dadada" stroke-width="2.2"/><path d="M8.3 11.4L25.6 22.4" stroke="#dadada" stroke-width="2.2"/></svg>
<div class="t" style="left:1432.00px;top:1117.59px;font-size:26px;line-height:26px;color:#2b2b2b;letter-spacing:-1.194px;-webkit-text-stroke-width:0.35px;">Not Enabled</div>
<svg class="abs" style="left:2845px;top:1119px" width="160" height="30" viewBox="0 0 160 30">
<g fill="#222">
<rect x="4" y="4.9" width="2" height="22"/><rect x="4" y="24.9" width="22.1" height="2"/>
<rect x="8.1" y="17.1" width="3.7" height="5.4" rx="0.8"/><rect x="14" y="12.9" width="3.7" height="9.6" rx="0.8"/><rect x="20.2" y="8.7" width="3.8" height="13.8" rx="0.8"/>
<path fill-rule="evenodd" d="M46 5.8a2 2 0 0 1 2-2h20a2 2 0 0 1 2 2v13.5a3 3 0 0 1-3 3H49a3 3 0 0 1-3-3zM48.1 5.9v12.9H68V5.9z"/>
<path d="M51 22h14l1.3 2.8H49.7z"/>
</g>
<g fill="none" stroke="#222" stroke-width="2">
<path d="M106 5H94.5a3.5 3.5 0 0 0-3.5 3.5v9.7a3.5 3.5 0 0 0 3.5 3.5h10a3.5 3.5 0 0 0 3.5-3.5V15.5"/>
</g>
<g fill="none" stroke="#222" stroke-width="1.8">
<path d="M134 8.1h19M139.3 7.8V5.6a1.3 1.3 0 0 1 1.3-1.3h6a1.3 1.3 0 0 1 1.3 1.3v2.2M136.7 8.5v13.3a1.9 1.9 0 0 0 1.9 1.9h9.4a1.9 1.9 0 0 0 1.9-1.9V8.5"/>
</g>
<g stroke="#222" stroke-width="1.4"><path d="M140 12.2v8M143.2 12.2v8M146.6 12.2v8"/></g>
<path fill="#222" d="M111.7 3.6l3.2 3.2-10.6 10.6-5.2 1.4 1.4-5.2z"/>
<path fill="none" stroke="#fff" stroke-width="0.7" d="M101.3 14.8l3.2 3.2M109.4 6.0l3 3"/>
</svg>
<div class="abs" style="left:51px;top:1238px;width:3236px;height:2px;background:#e2e2e2"></div>
<div class="cb" style="left:71px;top:1192px"></div>
<div class="t" style="left:129.50px;top:1190.19px;font-size:26px;line-height:26px;color:#2b2b2b;letter-spacing:-1.304px;-webkit-text-stroke-width:0.35px;">Datastore Read Latency</div>
<div class="t" style="left:670.00px;top:1190.19px;font-size:26px;line-height:26px;color:#2b2b2b;letter-spacing:-1.317px;-webkit-text-stroke-width:0.35px;">VIWebService</div>
<div class="t" style="left:1029.00px;top:1190.19px;font-size:26px;line-height:26px;color:#2b2b2b;-webkit-text-stroke-width:0.35px;">5</div>
<svg class="abs" style="left:1389px;top:1186px" width="34" height="34" viewBox="0 0 34 34"><circle cx="17" cy="17" r="17" fill="#7b7b7b"/><circle cx="17" cy="17" r="10.4" fill="none" stroke="#dadada" stroke-width="2.2"/><path d="M8.3 11.4L25.6 22.4" stroke="#dadada" stroke-width="2.2"/></svg>
<div class="t" style="left:1432.00px;top:1187.59px;font-size:26px;line-height:26px;color:#2b2b2b;letter-spacing:-1.194px;-webkit-text-stroke-width:0.35px;">Not Enabled</div>
<svg class="abs" style="left:2845px;top:1189px" width="160" height="30" viewBox="0 0 160 30">
<g fill="#222">
<rect x="4" y="4.9" width="2" height="22"/><rect x="4" y="24.9" width="22.1" height="2"/>
<rect x="8.1" y="17.1" width="3.7" height="5.4" rx="0.8"/><rect x="14" y="12.9" width="3.7" height="9.6" rx="0.8"/><rect x="20.2" y="8.7" width="3.8" height="13.8" rx="0.8"/>
<path fill-rule="evenodd" d="M46 5.8a2 2 0 0 1 2-2h20a2 2 0 0 1 2 2v13.5a3 3 0 0 1-3 3H49a3 3 0 0 1-3-3zM48.1 5.9v12.9H68V5.9z"/>
<path d="M51 22h14l1.3 2.8H49.7z"/>
</g>
<g fill="none" stroke="#222" stroke-width="2">
<path d="M106 5H94.5a3.5 3.5 0 0 0-3.5 3.5v9.7a3.5 3.5 0 0 0 3.5 3.5h10a3.5 3.5 0 0 0 3.5-3.5V15.5"/>
</g>
<g fill="none" stroke="#222" stroke-width="1.8">
<path d="M134 8.1h19M139.3 7.8V5.6a1.3 1.3 0 0 1 1.3-1.3h6a1.3 1.3 0 0 1 1.3 1.3v2.2M136.7 8.5v13.3a1.9 1.9 0 0 0 1.9 1.9h9.4a1.9 1.9 0 0 0 1.9-1.9V8.5"/>
</g>
<g stroke="#222" stroke-width="1.4"><path d="M140 12.2v8M143.2 12.2v8M146.6 12.2v8"/></g>
<path fill="#222" d="M111.7 3.6l3.2 3.2-10.6 10.6-5.2 1.4 1.4-5.2z"/>
<path fill="none" stroke="#fff" stroke-width="0.7" d="M101.3 14.8l3.2 3.2M109.4 6.0l3 3"/>
</svg>
<div class="abs" style="left:51px;top:1308px;width:3236px;height:2px;background:#e2e2e2"></div>
<div class="cb" style="left:71px;top:1262px"></div>
<div class="t" style="left:129.50px;top:1260.19px;font-size:26px;line-height:26px;color:#2b2b2b;letter-spacing:-1.399px;-webkit-text-stroke-width:0.35px;">Datastore Read Rate</div>
<div class="t" style="left:670.00px;top:1260.19px;font-size:26px;line-height:26px;color:#2b2b2b;letter-spacing:-1.317px;-webkit-text-stroke-width:0.35px;">VIWebService</div>
<div class="t" style="left:1029.00px;top:1260.19px;font-size:26px;line-height:26px;color:#2b2b2b;-webkit-text-stroke-width:0.35px;">5</div>
<svg class="abs" style="left:1389px;top:1256px" width="34" height="34" viewBox="0 0 34 34"><circle cx="17" cy="17" r="17" fill="#7b7b7b"/><circle cx="17" cy="17" r="10.4" fill="none" stroke="#dadada" stroke-width="2.2"/><path d="M8.3 11.4L25.6 22.4" stroke="#dadada" stroke-width="2.2"/></svg>
<div class="t" style="left:1432.00px;top:1257.59px;font-size:26px;line-height:26px;color:#2b2b2b;letter-spacing:-1.194px;-webkit-text-stroke-width:0.35px;">Not Enabled</div>
<svg class="abs" style="left:2845px;top:1259px" width="160" height="30" viewBox="0 0 160 30">
<g fill="#222">
<rect x="4" y="4.9" width="2" height="22"/><rect x="4" y="24.9" width="22.1" height="2"/>
<rect x="8.1" y="17.1" width="3.7" height="5.4" rx="0.8"/><rect x="14" y="12.9" width="3.7" height="9.6" rx="0.8"/><rect x="20.2" y="8.7" width="3.8" height="13.8" rx="0.8"/>
<path fill-rule="evenodd" d="M46 5.8a2 2 0 0 1 2-2h20a2 2 0 0 1 2 2v13.5a3 3 0 0 1-3 3H49a3 3 0 0 1-3-3zM48.1 5.9v12.9H68V5.9z"/>
<path d="M51 22h14l1.3 2.8H49.7z"/>
</g>
<g fill="none" stroke="#222" stroke-width="2">
<path d="M106 5H94.5a3.5 3.5 0 0 0-3.5 3.5v9.7a3.5 3.5 0 0 0 3.5 3.5h10a3.5 3.5 0 0 0 3.5-3.5V15.5"/>
</g>
<g fill="none" stroke="#222" stroke-width="1.8">
<path d="M134 8.1h19M139.3 7.8V5.6a1.3 1.3 0 0 1 1.3-1.3h6a1.3 1.3 0 0 1 1.3 1.3v2.2M136.7 8.5v13.3a1.9 1.9 0 0 0 1.9 1.9h9.4a1.9 1.9 0 0 0 1.9-1.9V8.5"/>
</g>
<g stroke="#222" stroke-width="1.4"><path d="M140 12.2v8M143.2 12.2v8M146.6 12.2v8"/></g>
<path fill="#222" d="M111.7 3.6l3.2 3.2-10.6 10.6-5.2 1.4 1.4-5.2z"/>
<path fill="none" stroke="#fff" stroke-width="0.7" d="M101.3 14.8l3.2 3.2M109.4 6.0l3 3"/>
</svg>
<div class="abs" style="left:51px;top:1378px;width:3236px;height:2px;background:#e2e2e2"></div>
<div class="cb" style="left:71px;top:1332px"></div>
<div class="t" style="left:129.50px;top:1330.19px;font-size:26px;line-height:26px;color:#2b2b2b;letter-spacing:-1.513px;-webkit-text-stroke-width:0.35px;">Datastore Read Requests Rate</div>
<div class="t" style="left:670.00px;top:1330.19px;font-size:26px;line-height:26px;color:#2b2b2b;letter-spacing:-1.317px;-webkit-text-stroke-width:0.35px;">VIWebService</div>
<div class="t" style="left:1029.00px;top:1330.19px;font-size:26px;line-height:26px;color:#2b2b2b;-webkit-text-stroke-width:0.35px;">5</div>
<svg class="abs" style="left:1389px;top:1326px" width="34" height="34" viewBox="0 0 34 34"><circle cx="17" cy="17" r="17" fill="#7b7b7b"/><circle cx="17" cy="17" r="10.4" fill="none" stroke="#dadada" stroke-width="2.2"/><path d="M8.3 11.4L25.6 22.4" stroke="#dadada" stroke-width="2.2"/></svg>
<div class="t" style="left:1432.00px;top:1327.59px;font-size:26px;line-height:26px;color:#2b2b2b;letter-spacing:-1.194px;-webkit-text-stroke-width:0.35px;">Not Enabled</div>
<svg class="abs" style="left:2845px;top:1329px" width="160" height="30" viewBox="0 0 160 30">
<g fill="#222">
<rect x="4" y="4.9" width="2" height="22"/><rect x="4" y="24.9" width="22.1" height="2"/>
<rect x="8.1" y="17.1" width="3.7" height="5.4" rx="0.8"/><rect x="14" y="12.9" width="3.7" height="9.6" rx="0.8"/><rect x="20.2" y="8.7" width="3.8" height="13.8" rx="0.8"/>
<path fill-rule="evenodd" d="M46 5.8a2 2 0 0 1 2-2h20a2 2 0 0 1 2 2v13.5a3 3 0 0 1-3 3H49a3 3 0 0 1-3-3zM48.1 5.9v12.9H68V5.9z"/>
<path d="M51 22h14l1.3 2.8H49.7z"/>
</g>
<g fill="none" stroke="#222" stroke-width="2">
<path d="M106 5H94.5a3.5 3.5 0 0 0-3.5 3.5v9.7a3.5 3.5 0 0 0 3.5 3.5h10a3.5 3.5 0 0 0 3.5-3.5V15.5"/>
</g>
<g fill="none" stroke="#222" stroke-width="1.8">
<path d="M134 8.1h19M139.3 7.8V5.6a1.3 1.3 0 0 1 1.3-1.3h6a1.3 1.3 0 0 1 1.3 1.3v2.2M136.7 8.5v13.3a1.9 1.9 0 0 0 1.9 1.9h9.4a1.9 1.9 0 0 0 1.9-1.9V8.5"/>
</g>
<g stroke="#222" stroke-width="1.4"><path d="M140 12.2v8M143.2 12.2v8M146.6 12.2v8"/></g>
<path fill="#222" d="M111.7 3.6l3.2 3.2-10.6 10.6-5.2 1.4 1.4-5.2z"/>
<path fill="none" stroke="#fff" stroke-width="0.7" d="M101.3 14.8l3.2 3.2M109.4 6.0l3 3"/>
</svg>
<div class="abs" style="left:51px;top:1448px;width:3236px;height:2px;background:#e2e2e2"></div>
<div class="cb" style="left:71px;top:1402px"></div>
<div class="t" style="left:129.50px;top:1400.19px;font-size:26px;line-height:26px;color:#2b2b2b;letter-spacing:-0.837px;-webkit-text-stroke-width:0.35px;">Datastore Write Latency</div>
<div class="t" style="left:670.00px;top:1400.19px;font-size:26px;line-height:26px;color:#2b2b2b;letter-spacing:-1.317px;-webkit-text-stroke-width:0.35px;">VIWebService</div>
<div class="t" style="left:1029.00px;top:1400.19px;font-size:26px;line-height:26px;color:#2b2b2b;-webkit-text-stroke-width:0.35px;">5</div>
<svg class="abs" style="left:1389px;top:1396px" width="34" height="34" viewBox="0 0 34 34"><circle cx="17" cy="17" r="17" fill="#7b7b7b"/><circle cx="17" cy="17" r="10.4" fill="none" stroke="#dadada" stroke-width="2.2"/><path d="M8.3 11.4L25.6 22.4" stroke="#dadada" stroke-width="2.2"/></svg>
<div class="t" style="left:1432.00px;top:1397.59px;font-size:26px;line-height:26px;color:#2b2b2b;letter-spacing:-1.194px;-webkit-text-stroke-width:0.35px;">Not Enabled</div>
<svg class="abs" style="left:2845px;top:1399px" width="160" height="30" viewBox="0 0 160 30">
<g fill="#222">
<rect x="4" y="4.9" width="2" height="22"/><rect x="4" y="24.9" width="22.1" height="2"/>
<rect x="8.1" y="17.1" width="3.7" height="5.4" rx="0.8"/><rect x="14" y="12.9" width="3.7" height="9.6" rx="0.8"/><rect x="20.2" y="8.7" width="3.8" height="13.8" rx="0.8"/>
<path fill-rule="evenodd" d="M46 5.8a2 2 0 0 1 2-2h20a2 2 0 0 1 2 2v13.5a3 3 0 0 1-3 3H49a3 3 0 0 1-3-3zM48.1 5.9v12.9H68V5.9z"/>
<path d="M51 22h14l1.3 2.8H49.7z"/>
</g>
<g fill="none" stroke="#222" stroke-width="2">
<path d="M106 5H94.5a3.5 3.5 0 0 0-3.5 3.5v9.7a3.5 3.5 0 0 0 3.5 3.5h10a3.5 3.5 0 0 0 3.5-3.5V15.5"/>
</g>
<g fill="none" stroke="#222" stroke-width="1.8">
<path d="M134 8.1h19M139.3 7.8V5.6a1.3 1.3 0 0 1 1.3-1.3h6a1.3 1.3 0 0 1 1.3 1.3v2.2M136.7 8.5v13.3a1.9 1.9 0 0 0 1.9 1.9h9.4a1.9 1.9 0 0 0 1.9-1.9V8.5"/>
</g>
<g stroke="#222" stroke-width="1.4"><path d="M140 12.2v8M143.2 12.2v8M146.6 12.2v8"/></g>
<path fill="#222" d="M111.7 3.6l3.2 3.2-10.6 10.6-5.2 1.4 1.4-5.2z"/>
<path fill="none" stroke="#fff" stroke-width="0.7" d="M101.3 14.8l3.2 3.2M109.4 6.0l3 3"/>
</svg>
<div class="abs" style="left:51px;top:1518px;width:3236px;height:2px;background:#e2e2e2"></div>
<div class="cb" style="left:71px;top:1472px"></div>
<div class="t" style="left:129.50px;top:1470.19px;font-size:26px;line-height:26px;color:#2b2b2b;letter-spacing:-0.780px;-webkit-text-stroke-width:0.35px;">Datastore Write Rate</div>
<div class="t" style="left:670.00px;top:1470.19px;font-size:26px;line-height:26px;color:#2b2b2b;letter-spacing:-1.317px;-webkit-text-stroke-width:0.35px;">VIWebService</div>
<div class="t" style="left:1029.00px;top:1470.19px;font-size:26px;line-height:26px;color:#2b2b2b;-webkit-text-stroke-width:0.35px;">5</div>
<svg class="abs" style="left:1389px;top:1466px" width="34" height="34" viewBox="0 0 34 34"><circle cx="17" cy="17" r="17" fill="#7b7b7b"/><circle cx="17" cy="17" r="10.4" fill="none" stroke="#dadada" stroke-width="2.2"/><path d="M8.3 11.4L25.6 22.4" stroke="#dadada" stroke-width="2.2"/></svg>
<div class="t" style="left:1432.00px;top:1467.59px;font-size:26px;line-height:26px;color:#2b2b2b;letter-spacing:-1.194px;-webkit-text-stroke-width:0.35px;">Not Enabled</div>
<svg class="abs" style="left:2845px;top:1469px" width="160" height="30" viewBox="0 0 160 30">
<g fill="#222">
<rect x="4" y="4.9" width="2" height="22"/><rect x="4" y="24.9" width="22.1" height="2"/>
<rect x="8.1" y="17.1" width="3.7" height="5.4" rx="0.8"/><rect x="14" y="12.9" width="3.7" height="9.6" rx="0.8"/><rect x="20.2" y="8.7" width="3.8" height="13.8" rx="0.8"/>
<path fill-rule="evenodd" d="M46 5.8a2 2 0 0 1 2-2h20a2 2 0 0 1 2 2v13.5a3 3 0 0 1-3 3H49a3 3 0 0 1-3-3zM48.1 5.9v12.9H68V5.9z"/>
<path d="M51 22h14l1.3 2.8H49.7z"/>
</g>
<g fill="none" stroke="#222" stroke-width="2">
<path d="M106 5H94.5a3.5 3.5 0 0 0-3.5 3.5v9.7a3.5 3.5 0 0 0 3.5 3.5h10a3.5 3.5 0 0 0 3.5-3.5V15.5"/>
</g>
<g fill="none" stroke="#222" stroke-width="1.8">
<path d="M134 8.1h19M139.3 7.8V5.6a1.3 1.3 0 0 1 1.3-1.3h6a1.3 1.3 0 0 1 1.3 1.3v2.2M136.7 8.5v13.3a1.9 1.9 0 0 0 1.9 1.9h9.4a1.9 1.9 0 0 0 1.9-1.9V8.5"/>
</g>
<g stroke="#222" stroke-width="1.4"><path d="M140 12.2v8M143.2 12.2v8M146.6 12.2v8"/></g>
<path fill="#222" d="M111.7 3.6l3.2 3.2-10.6 10.6-5.2 1.4 1.4-5.2z"/>
<path fill="none" stroke="#fff" stroke-width="0.7" d="M101.3 14.8l3.2 3.2M109.4 6.0l3 3"/>
</svg>
<div class="abs" style="left:51px;top:1588px;width:3236px;height:2px;background:#e2e2e2"></div>
<div class="cb" style="left:71px;top:1542px"></div>
<div class="t" style="left:129.50px;top:1540.19px;font-size:26px;line-height:26px;color:#2b2b2b;letter-spacing:-1.078px;-webkit-text-stroke-width:0.35px;">Datastore Write Requests Rate</div>
<div class="t" style="left:670.00px;top:1540.19px;font-size:26px;line-height:26px;color:#2b2b2b;letter-spacing:-1.317px;-webkit-text-stroke-width:0.35px;">VIWebService</div>
<div class="t" style="left:1029.00px;top:1540.19px;font-size:26px;line-height:26px;color:#2b2b2b;-webkit-text-stroke-width:0.35px;">5</div>
<svg class="abs" style="left:1389px;top:1536px" width="34" height="34" viewBox="0 0 34 34"><circle cx="17" cy="17" r="17" fill="#7b7b7b"/><circle cx="17" cy="17" r="10.4" fill="none" stroke="#dadada" stroke-width="2.2"/><path d="M8.3 11.4L25.6 22.4" stroke="#dadada" stroke-width="2.2"/></svg>
<div class="t" style="left:1432.00px;top:1537.59px;font-size:26px;line-height:26px;color:#2b2b2b;letter-spacing:-1.194px;-webkit-text-stroke-width:0.35px;">Not Enabled</div>
<svg class="abs" style="left:2845px;top:1539px" width="160" height="30" viewBox="0 0 160 30">
<g fill="#222">
<rect x="4" y="4.9" width="2" height="22"/><rect x="4" y="24.9" width="22.1" height="2"/>
<rect x="8.1" y="17.1" width="3.7" height="5.4" rx="0.8"/><rect x="14" y="12.9" width="3.7" height="9.6" rx="0.8"/><rect x="20.2" y="8.7" width="3.8" height="13.8" rx="0.8"/>
<path fill-rule="evenodd" d="M46 5.8a2 2 0 0 1 2-2h20a2 2 0 0 1 2 2v13.5a3 3 0 0 1-3 3H49a3 3 0 0 1-3-3zM48.1 5.9v12.9H68V5.9z"/>
<path d="M51 22h14l1.3 2.8H49.7z"/>
</g>
<g fill="none" stroke="#222" stroke-width="2">
<path d="M106 5H94.5a3.5 3.5 0 0 0-3.5 3.5v9.7a3.5 3.5 0 0 0 3.5 3.5h10a3.5 3.5 0 0 0 3.5-3.5V15.5"/>
</g>
<g fill="none" stroke="#222" stroke-width="1.8">
<path d="M134 8.1h19M139.3 7.8V5.6a1.3 1.3 0 0 1 1.3-1.3h6a1.3 1.3 0 0 1 1.3 1.3v2.2M136.7 8.5v13.3a1.9 1.9 0 0 0 1.9 1.9h9.4a1.9 1.9 0 0 0 1.9-1.9V8.5"/>
</g>
<g stroke="#222" stroke-width="1.4"><path d="M140 12.2v8M143.2 12.2v8M146.6 12.2v8"/></g>
<path fill="#222" d="M111.7 3.6l3.2 3.2-10.6 10.6-5.2 1.4 1.4-5.2z"/>
<path fill="none" stroke="#fff" stroke-width="0.7" d="M101.3 14.8l3.2 3.2M109.4 6.0l3 3"/>
</svg>
<div class="abs" style="left:51px;top:1658px;width:3236px;height:2px;background:#e2e2e2"></div>
<div class="cb" style="left:71px;top:1612px"></div>
<div class="t" style="left:129.50px;top:1610.19px;font-size:26px;line-height:26px;color:#2b2b2b;letter-spacing:-1.374px;-webkit-text-stroke-width:0.35px;">Disk I/O Usage</div>
<div class="t" style="left:670.00px;top:1610.19px;font-size:26px;line-height:26px;color:#2b2b2b;letter-spacing:-1.317px;-webkit-text-stroke-width:0.35px;">VIWebService</div>
<div class="t" style="left:1029.00px;top:1610.19px;font-size:26px;line-height:26px;color:#2b2b2b;-webkit-text-stroke-width:0.35px;">5</div>
<svg class="abs" style="left:1389px;top:1606px" width="34" height="34" viewBox="0 0 34 34"><circle cx="17" cy="17" r="17" fill="#7b7b7b"/><circle cx="17" cy="17" r="10.4" fill="none" stroke="#dadada" stroke-width="2.2"/><path d="M8.3 11.4L25.6 22.4" stroke="#dadada" stroke-width="2.2"/></svg>
<div class="t" style="left:1432.00px;top:1607.59px;font-size:26px;line-height:26px;color:#2b2b2b;letter-spacing:-1.194px;-webkit-text-stroke-width:0.35px;">Not Enabled</div>
<svg class="abs" style="left:2845px;top:1609px" width="160" height="30" viewBox="0 0 160 30">
<g fill="#222">
<rect x="4" y="4.9" width="2" height="22"/><rect x="4" y="24.9" width="22.1" height="2"/>
<rect x="8.1" y="17.1" width="3.7" height="5.4" rx="0.8"/><rect x="14" y="12.9" width="3.7" height="9.6" rx="0.8"/><rect x="20.2" y="8.7" width="3.8" height="13.8" rx="0.8"/>
<path fill-rule="evenodd" d="M46 5.8a2 2 0 0 1 2-2h20a2 2 0 0 1 2 2v13.5a3 3 0 0 1-3 3H49a3 3 0 0 1-3-3zM48.1 5.9v12.9H68V5.9z"/>
<path d="M51 22h14l1.3 2.8H49.7z"/>
</g>
<g fill="none" stroke="#222" stroke-width="2">
<path d="M106 5H94.5a3.5 3.5 0 0 0-3.5 3.5v9.7a3.5 3.5 0 0 0 3.5 3.5h10a3.5 3.5 0 0 0 3.5-3.5V15.5"/>
</g>
<g fill="none" stroke="#222" stroke-width="1.8">
<path d="M134 8.1h19M139.3 7.8V5.6a1.3 1.3 0 0 1 1.3-1.3h6a1.3 1.3 0 0 1 1.3 1.3v2.2M136.7 8.5v13.3a1.9 1.9 0 0 0 1.9 1.9h9.4a1.9 1.9 0 0 0 1.9-1.9V8.5"/>
</g>
<g stroke="#222" stroke-width="1.4"><path d="M140 12.2v8M143.2 12.2v8M146.6 12.2v8"/></g>
<path fill="#222" d="M111.7 3.6l3.2 3.2-10.6 10.6-5.2 1.4 1.4-5.2z"/>
<path fill="none" stroke="#fff" stroke-width="0.7" d="M101.3 14.8l3.2 3.2M109.4 6.0l3 3"/>
</svg>
<div class="abs" style="left:51px;top:1728px;width:3236px;height:2px;background:#e2e2e2"></div>
<div class="cb" style="left:71px;top:1682px"></div>
<div class="t" style="left:129.50px;top:1680.19px;font-size:26px;line-height:26px;color:#2b2b2b;letter-spacing:-1.740px;-webkit-text-stroke-width:0.35px;">Disk Read Rate</div>
<div class="t" style="left:670.00px;top:1680.19px;font-size:26px;line-height:26px;color:#2b2b2b;letter-spacing:-1.317px;-webkit-text-stroke-width:0.35px;">VIWebService</div>
<div class="t" style="left:1029.00px;top:1680.19px;font-size:26px;line-height:26px;color:#2b2b2b;-webkit-text-stroke-width:0.35px;">5</div>
<svg class="abs" style="left:1389px;top:1676px" width="34" height="34" viewBox="0 0 34 34"><circle cx="17" cy="17" r="17" fill="#7b7b7b"/><circle cx="17" cy="17" r="10.4" fill="none" stroke="#dadada" stroke-width="2.2"/><path d="M8.3 11.4L25.6 22.4" stroke="#dadada" stroke-width="2.2"/></svg>
<div class="t" style="left:1432.00px;top:1677.59px;font-size:26px;line-height:26px;color:#2b2b2b;letter-spacing:-1.194px;-webkit-text-stroke-width:0.35px;">Not Enabled</div>
<svg class="abs" style="left:2845px;top:1679px" width="160" height="30" viewBox="0 0 160 30">
<g fill="#222">
<rect x="4" y="4.9" width="2" height="22"/><rect x="4" y="24.9" width="22.1" height="2"/>
<rect x="8.1" y="17.1" width="3.7" height="5.4" rx="0.8"/><rect x="14" y="12.9" width="3.7" height="9.6" rx="0.8"/><rect x="20.2" y="8.7" width="3.8" height="13.8" rx="0.8"/>
<path fill-rule="evenodd" d="M46 5.8a2 2 0 0 1 2-2h20a2 2 0 0 1 2 2v13.5a3 3 0 0 1-3 3H49a3 3 0 0 1-3-3zM48.1 5.9v12.9H68V5.9z"/>
<path d="M51 22h14l1.3 2.8H49.7z"/>
</g>
<g fill="none" stroke="#222" stroke-width="2">
<path d="M106 5H94.5a3.5 3.5 0 0 0-3.5 3.5v9.7a3.5 3.5 0 0 0 3.5 3.5h10a3.5 3.5 0 0 0 3.5-3.5V15.5"/>
</g>
<g fill="none" stroke="#222" stroke-width="1.8">
<path d="M134 8.1h19M139.3 7.8V5.6a1.3 1.3 0 0 1 1.3-1.3h6a1.3 1.3 0 0 1 1.3 1.3v2.2M136.7 8.5v13.3a1.9 1.9 0 0 0 1.9 1.9h9.4a1.9 1.9 0 0 0 1.9-1.9V8.5"/>
</g>
<g stroke="#222" stroke-width="1.4"><path d="M140 12.2v8M143.2 12.2v8M146.6 12.2v8"/></g>
<path fill="#222" d="M111.7 3.6l3.2 3.2-10.6 10.6-5.2 1.4 1.4-5.2z"/>
<path fill="none" stroke="#fff" stroke-width="0.7" d="M101.3 14.8l3.2 3.2M109.4 6.0l3 3"/>
</svg>
<div class="abs" style="left:51px;top:1798px;width:3236px;height:2px;background:#e2e2e2"></div>
<div class="cb" style="left:71px;top:1752px"></div>
<div class="t" style="left:129.50px;top:1750.19px;font-size:26px;line-height:26px;color:#2b2b2b;letter-spacing:-1.764px;-webkit-text-stroke-width:0.35px;">Disk Read Requests</div>
<div class="t" style="left:670.00px;top:1750.19px;font-size:26px;line-height:26px;color:#2b2b2b;letter-spacing:-1.317px;-webkit-text-stroke-width:0.35px;">VIWebService</div>
<div class="t" style="left:1029.00px;top:1750.19px;font-size:26px;line-height:26px;color:#2b2b2b;-webkit-text-stroke-width:0.35px;">5</div>
<svg class="abs" style="left:1389px;top:1746px" width="34" height="34" viewBox="0 0 34 34"><circle cx="17" cy="17" r="17" fill="#7b7b7b"/><circle cx="17" cy="17" r="10.4" fill="none" stroke="#dadada" stroke-width="2.2"/><path d="M8.3 11.4L25.6 22.4" stroke="#dadada" stroke-width="2.2"/></svg>
<div class="t" style="left:1432.00px;top:1747.59px;font-size:26px;line-height:26px;color:#2b2b2b;letter-spacing:-1.194px;-webkit-text-stroke-width:0.35px;">Not Enabled</div>
<svg class="abs" style="left:2845px;top:1749px" width="160" height="30" viewBox="0 0 160 30">
<g fill="#222">
<rect x="4" y="4.9" width="2" height="22"/><rect x="4" y="24.9" width="22.1" height="2"/>
<rect x="8.1" y="17.1" width="3.7" height="5.4" rx="0.8"/><rect x="14" y="12.9" width="3.7" height="9.6" rx="0.8"/><rect x="20.2" y="8.7" width="3.8" height="13.8" rx="0.8"/>
<path fill-rule="evenodd" d="M46 5.8a2 2 0 0 1 2-2h20a2 2 0 0 1 2 2v13.5a3 3 0 0 1-3 3H49a3 3 0 0 1-3-3zM48.1 5.9v12.9H68V5.9z"/>
<path d="M51 22h14l1.3 2.8H49.7z"/>
</g>
<g fill="none" stroke="#222" stroke-width="2">
<path d="M106 5H94.5a3.5 3.5 0 0 0-3.5 3.5v9.7a3.5 3.5 0 0 0 3.5 3.5h10a3.5 3.5 0 0 0 3.5-3.5V15.5"/>
</g>
<g fill="none" stroke="#222" stroke-width="1.8">
<path d="M134 8.1h19M139.3 7.8V5.6a1.3 1.3 0 0 1 1.3-1.3h6a1.3 1.3 0 0 1 1.3 1.3v2.2M136.7 8.5v13.3a1.9 1.9 0 0 0 1.9 1.9h9.4a1.9 1.9 0 0 0 1.9-1.9V8.5"/>
</g>
<g stroke="#222" stroke-width="1.4"><path d="M140 12.2v8M143.2 12.2v8M146.6 12.2v8"/></g>
<path fill="#222" d="M111.7 3.6l3.2 3.2-10.6 10.6-5.2 1.4 1.4-5.2z"/>
<path fill="none" stroke="#fff" stroke-width="0.7" d="M101.3 14.8l3.2 3.2M109.4 6.0l3 3"/>
</svg>
<div class="abs" style="left:51px;top:1868px;width:3236px;height:2px;background:#e2e2e2"></div>
<div class="cb" style="left:71px;top:1822px"></div>
<div class="t" style="left:129.50px;top:1820.19px;font-size:26px;line-height:26px;color:#2b2b2b;-webkit-text-stroke-width:0.35px;">Disk Utilization</div>
<div class="t" style="left:670.00px;top:1820.19px;font-size:26px;line-height:26px;color:#2b2b2b;-webkit-text-stroke-width:0.35px;">WMI</div>
<div class="t" style="left:1029.00px;top:1820.19px;font-size:26px;line-height:26px;color:#2b2b2b;-webkit-text-stroke-width:0.35px;">60</div>
<svg class="abs" style="left:1389px;top:1816px" width="34" height="34" viewBox="0 0 34 34"><circle cx="17" cy="17" r="17" fill="#7b7b7b"/><circle cx="17" cy="17" r="10.4" fill="none" stroke="#dadada" stroke-width="2.2"/><path d="M8.3 11.4L25.6 22.4" stroke="#dadada" stroke-width="2.2"/></svg>
<div class="t" style="left:1432.00px;top:1817.59px;font-size:26px;line-height:26px;color:#2b2b2b;letter-spacing:-1.194px;-webkit-text-stroke-width:0.35px;">Not Enabled</div>
<svg class="abs" style="left:2845px;top:1819px" width="160" height="30" viewBox="0 0 160 30">
<g fill="#222">
<rect x="4" y="4.9" width="2" height="22"/><rect x="4" y="24.9" width="22.1" height="2"/>
<rect x="8.1" y="17.1" width="3.7" height="5.4" rx="0.8"/><rect x="14" y="12.9" width="3.7" height="9.6" rx="0.8"/><rect x="20.2" y="8.7" width="3.8" height="13.8" rx="0.8"/>
<path fill-rule="evenodd" d="M46 5.8a2 2 0 0 1 2-2h20a2 2 0 0 1 2 2v13.5a3 3 0 0 1-3 3H49a3 3 0 0 1-3-3zM48.1 5.9v12.9H68V5.9z"/>
<path d="M51 22h14l1.3 2.8H49.7z"/>
</g>
<g fill="none" stroke="#222" stroke-width="2">
<path d="M106 5H94.5a3.5 3.5 0 0 0-3.5 3.5v9.7a3.5 3.5 0 0 0 3.5 3.5h10a3.5 3.5 0 0 0 3.5-3.5V15.5"/>
</g>
<g fill="none" stroke="#222" stroke-width="1.8">
<path d="M134 8.1h19M139.3 7.8V5.6a1.3 1.3 0 0 1 1.3-1.3h6a1.3 1.3 0 0 1 1.3 1.3v2.2M136.7 8.5v13.3a1.9 1.9 0 0 0 1.9 1.9h9.4a1.9 1.9 0 0 0 1.9-1.9V8.5"/>
</g>
<g stroke="#222" stroke-width="1.4"><path d="M140 12.2v8M143.2 12.2v8M146.6 12.2v8"/></g>
<path fill="#222" d="M111.7 3.6l3.2 3.2-10.6 10.6-5.2 1.4 1.4-5.2z"/>
<path fill="none" stroke="#fff" stroke-width="0.7" d="M101.3 14.8l3.2 3.2M109.4 6.0l3 3"/>
</svg>
<div class="abs" style="left:2968px;top:549px;width:47px;height:51px;border:3px solid #ff2417"></div>
<div class="abs" style="left:3319px;top:462px;width:30px;height:1367px;background:#f8f8f7;border-left:2px solid #ececec;border-right:2px solid #efefef"></div>
<div class="abs" style="left:3327px;top:468px;width:16px;height:451px;border-radius:8px;background:#c1c1c1"></div>
<div class="abs" style="left:3210px;top:1768px;width:88px;height:61px;background:#38ac6e;border-top:8px solid #48bd80"></div>
<svg class="abs" style="left:3230px;top:1780px" width="49" height="49" viewBox="0 0 49 49"><g fill="none" stroke="#e6f4ec" stroke-width="2">
<path d="M9.3 14.6V8a4 4 0 0 1 4-4h28.2a4 4 0 0 1 4 4v16.8a4 4 0 0 1-4 4h-3.1"/>
<path d="M6.2 14.6h28.2a4 4 0 0 1 4 4v15.4a4 4 0 0 1-4 4H17l-5.6 8.4V38H6.2a4 4 0 0 1-4-4V18.6a4 4 0 0 1 4-4z"/></g>
<g stroke="#d2ecdc" stroke-width="2.2"><path d="M10.7 22.4h10.6M10.7 27h19.9M10.7 31.2h19.9"/></g></svg>
</body></html>
